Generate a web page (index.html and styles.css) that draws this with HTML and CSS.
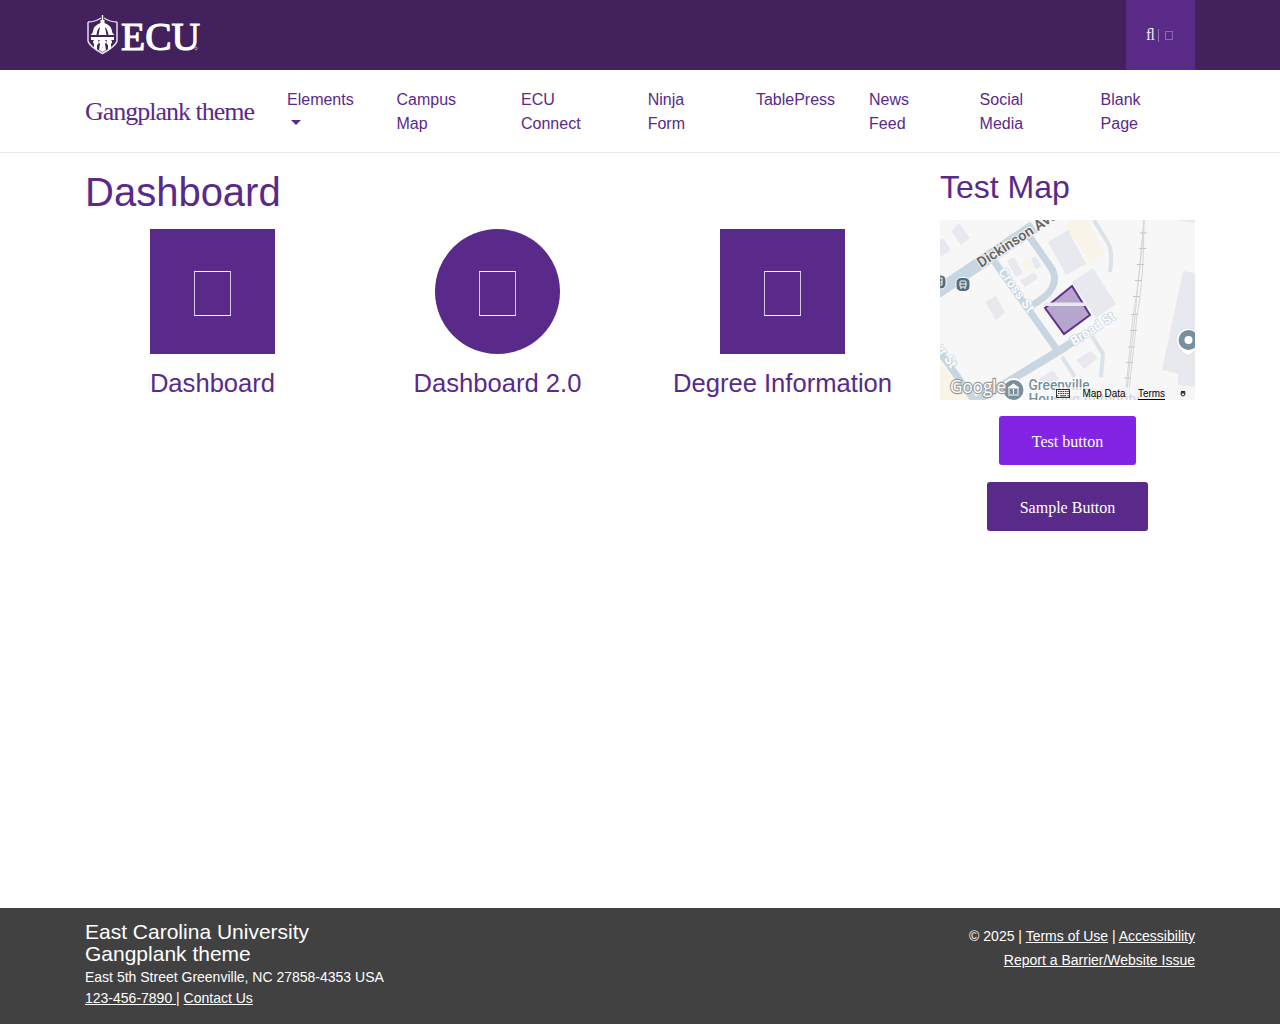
FILE: index.html
```html
<!DOCTYPE html>
<html lang="en">
<head>
<meta charset="utf-8">
<title>Dashboard - Gangplank theme</title>
<link rel="stylesheet" href="styles.css">
</head>
<body>
<header class="topbar"><div class="container topbar-inner">
  <svg class="logo" width="116" height="44" viewBox="85 13 116 44" aria-label="ECU">
    <path d="M88 22Q95 22 101 18M117 22Q110 22 104 18M88 22V41Q89 46 102.500 53.500Q116 46 117 41V22" fill="none" stroke="#e4dce9" stroke-width="1.500"/>
    <path d="M102.500 15V22" stroke="#fff" stroke-width="1.400"/>
    <path d="M100.500 20h4v3q7 2 8 10l2 2h-6q-1-6-3.500-8l1.500 8h-8l1.500-8q-3 2-3.500 8h-6l2-2q1-8 8-10z" fill="#fff"/>
    <path d="M91 37h23v3h-3q2 2 0 4v4l-3 2v-5q-3-2-1-5h-2q2 2 0 4l1 6-3.500 2-3.500-2 1-6q-2-2 0-4h-2q2 3-1 5v5l-3-2v-4q-2-2 0-4h-3z" fill="#fff"/>
    <text class="wordmark" x="121" y="49.700" textLength="79" lengthAdjust="spacingAndGlyphs">ECU</text>
    <circle cx="196" cy="48.500" r="1.300" fill="none" stroke="#bda9ca" stroke-width=".8"/>
  </svg>
  <div class="tools"><span class="search">&#xfb02;</span><span class="divider"></span><span class="small-box"></span></div>
</div></header>
<nav class="navbar"><div class="container nav-inner">
  <a class="brand">Gangplank theme</a>
  <div class="menu">
    <a>Elements<br><span class="caret"></span></a><a>Campus<br>Map</a><a>ECU<br>Connect</a><a>Ninja<br>Form</a><a>TablePress</a><a>News<br>Feed</a><a>Social<br>Media</a><a>Blank<br>Page</a>
  </div>
</div></nav>
<main class="container main">
  <section class="content">
    <h1>Dashboard</h1>
    <div class="cards">
      <a class="card"><span class="tile"><span class="glyph"></span></span><span class="label">Dashboard</span></a>
      <a class="card"><span class="tile round"><span class="glyph"></span></span><span class="label">Dashboard 2.0</span></a>
      <a class="card"><span class="tile"><span class="glyph"></span></span><span class="label">Degree Information</span></a>
    </div>
  </section>
  <aside class="sidebar">
    <h2>Test Map</h2>
    <svg class="map" width="255" height="180" viewBox="0 0 255 180">
      <rect width="255" height="180" fill="#f7f7f7"/>
      <path d="M0 142L30 180H0z" fill="#f8f4e8"/>
      <g fill="#e8e9ef">
        <path d="M11 11l8-8 11 15-9 7zM0 20l3-2 8 12-11 7zM45 82l11-6 9 17-9 7zM108 22l20-12 18 34-20 11zM132 62l21-14 23 36-20 14zM243 51l12 2v114l-17-2v-11l-16-4zM235 0h20v3zM136 140l15-9 7 7-14 11zM67 41l7-4 9 16-7 4zM80 61l14-9 4 6-13 9zM91 39l5-3 5 10-5 4zM99 159l14-9 6 9-14 7z"/>
      </g>
      <path d="M125 5l8-8h12l20 36-14 10zM82 43l4-4 9 8-7 4z" fill="#f9f4e8"/>
      <g fill="none" stroke="#dce2e9" stroke-width="4">
        <path d="M154 0L168 23Q173 32 170 52M122 137L135 157M152 116L163 134 161 157"/>
      </g>
      <g fill="none" stroke="#c8d6e2">
        <path d="M-3 72L94 7" stroke-width="13"/>
        <path d="M54 41L120 134" stroke-width="7"/>
        <path d="M31 184L122 129 143 115" stroke-width="8"/>
        <path d="M89 16L110 46Q118 57 112 68Q108 76 91 86" stroke-width="7"/>
        <path d="M-3 128L37 184" stroke-width="7"/>
      </g>
      <g fill="none" stroke="#d3d6da">
        <path d="M204 0Q200 60 193 96L185 180M204 0Q204 60 197 96L188 180M204 0L195 96 186 180"/>
        <path d="M200 13h7M199 28.500h7M197 44.500h7M195 60.500h7M193 76.500h7M191 94.500h7M190 110.500h7M188 127h7M186 142.500h7M184 158h7" stroke="#c5c8cb"/>
      </g>
      <path d="M105 88L132 66 150 95 124 114z" fill="#b6a5cd" stroke="#5e3191" stroke-width="2"/>
      <path d="M104 82.500H144L147 86H104z" fill="#e8e7ee"/>
      <g class="street">
        <text transform="translate(41 48) rotate(-33)" textLength="92" lengthAdjust="spacingAndGlyphs">Dickinson Ave</text>
      </g>
      <g class="road-name">
        <text transform="translate(58 52) rotate(54)" textLength="51">Cross St</text>
        <text transform="translate(134 126) rotate(-33)" textLength="50">Broad St</text>
        <text transform="translate(-5 127) rotate(54)">er St</text>
      </g>
      <g fill="#546e7d" stroke="#fff">
        <rect x="-8" y="55" width="14" height="14" rx="5"/><rect x="16" y="57.500" width="14" height="14" rx="5"/>
      </g>
      <g fill="none" stroke="#fff">
        <rect x="20" y="61" width="6" height="6" rx="1"/><path d="M20 64h6M21 69v-2M25 69v-2M0 58h2v7h-2M0 62h2"/>
      </g>
      <path d="M248 136Q236 129 236 120A12 12 0 0 1 260 120Q260 129 248 136z" fill="#fff" stroke="#ddd"/>
      <circle cx="248.500" cy="120" r="10" fill="#78909c"/><circle cx="248.500" cy="120" r="4" fill="#fff"/>
      <g class="place"><text x="88.500" y="170" textLength="61" lengthAdjust="spacingAndGlyphs">Greenville</text><text x="88.500" y="184" textLength="111" lengthAdjust="spacingAndGlyphs">Housing Authority</text></g>
      <circle cx="73.500" cy="170" r="11" fill="#78909c" stroke="#fff" stroke-width="2"/>
      <path d="M68 168l5.500-4 5.500 4zM69 169v5M73.500 169v5M78 169v5M68 175h11" fill="#fff" stroke="#fff"/>
      <text class="google" x="10" y="172.500" textLength="56" lengthAdjust="spacingAndGlyphs">Google</text>
      <rect x="115" y="167" width="140" height="13" fill="#f5f5f5" opacity=".7"/>
      <rect x="116.500" y="169.500" width="13" height="8" fill="#f5f5f5" stroke="#333"/>
      <path d="M118 171.500h11M118 173.500h11" stroke="#333" stroke-dasharray="1.500 .8"/><path d="M117 175.800h1.500M120 175.800h6M127.500 175.800h1.500" stroke="#333"/>
      <g class="credits"><text x="142.500" y="177" textLength="43" lengthAdjust="spacingAndGlyphs">Map Data</text><text x="198" y="177" textLength="27" lengthAdjust="spacingAndGlyphs">Terms</text></g>
      <path d="M198 179.500h27" stroke="#000"/>
      <path d="M241 171.500h4M240.500 173h5" stroke="#222"/><circle cx="243" cy="174" r="1.900" fill="none" stroke="#222"/>
    </svg>
    <a class="button bright">Test button</a>
    <a class="button">Sample Button</a>
  </aside>
</main>
<footer class="footer"><div class="container footer-inner">
  <div><div class="org">East Carolina University<br>Gangplank theme</div><div class="address">East 5th Street Greenville, NC 27858-4353 USA<br><u>123-456-7890 </u>| <u>Contact Us</u></div></div>
  <div class="legal">© 2025 | <u>Terms of Use</u> | <u>Accessibility</u><br><u>Report a Barrier/Website Issue</u></div>
</div></footer>
</body>
</html>
```
FILE: styles.css
```css
* { box-sizing: border-box; }
body { margin: 0; min-height: 1024px; display: flex; flex-direction: column; background: #fff; color: #592a8a; font: 16px/24px "Liberation Sans", Arial, sans-serif; }
.container { width: 1110px; margin: 0 auto; }
.topbar { height: 70px; background: #43215d; }
.topbar-inner { display: flex; justify-content: space-between; }
.logo { margin-top: 13px; overflow: visible; }
.wordmark { font: 41px "Liberation Serif", serif; fill: #fff; stroke: #fff; stroke-width: 1.200px; }
.tools { width: 69px; height: 70px; padding-left: 20px; background: #592a86; display: flex; align-items: center; }
.search { font: 16px "Liberation Serif", serif; color: #eee8f3; width: 12px; }
.divider { width: 1px; height: 13px; margin-right: 6px; background: #9175b1; }
.small-box { width: 8px; height: 9px; border: 1px solid #8b6bac; }
.navbar { height: 83px; border-bottom: 1px solid #e9e9e9; }
.nav-inner { display: flex; }
.brand { width: 202px; padding-top: 27px; font: 26px/30px "Liberation Serif", serif; letter-spacing: -1px; white-space: nowrap; }
.menu { display: grid; grid-template-columns: 109.500px 124.500px 126.700px 108.200px 113.200px 110.500px 121px 90px; padding-top: 18px; }
.caret { display: inline-block; margin-left: 4px; vertical-align: 4px; border: 5px solid transparent; border-top-color: #592a8a; border-bottom: 0; }
.main { flex: 1; display: flex; }
.content { width: 855px; }
h1, h2 { margin: 0; font-weight: 400; }
h1 { padding-top: 15px; font-size: 40px; line-height: 48px; }
.cards { margin-top: 13px; display: grid; grid-template-columns: repeat(3, 285px); }
.card { width: 255px; display: flex; flex-direction: column; align-items: center; }
.tile { width: 125px; height: 125px; display: flex; align-items: center; justify-content: center; background: #592a8a; }
.round { border-radius: 50%; }
.glyph { width: 37px; height: 45px; margin-top: 4px; border: 1px solid #fff; border-left-color: #d5c9e0; border-right-color: #d5c9e0; }
.label { margin-top: 14px; font-size: 25.600px; line-height: 31px; white-space: nowrap; }
.sidebar { width: 255px; display: flex; flex-direction: column; align-items: center; }
h2 { align-self: flex-start; margin-top: 15px; font-size: 32px; line-height: 38px; }
.map { margin: 14px 0 16px; }
.map text { font-family: Roboto, sans-serif; }
.map .street text { font-size: 14.500px; font-weight: 600; fill: #666; stroke: #f7f7f7; stroke-width: 2px; paint-order: stroke; }
.map .road-name text { font-size: 13px; font-weight: 500; fill: #fff; stroke: #c8d6e2; stroke-width: 1.500px; paint-order: stroke; }
.map .place text { font-size: 14px; font-weight: 500; fill: #78909c; stroke: #fff; stroke-width: 2px; paint-order: stroke; }
.map .google { font: 19px "Open Sans", sans-serif; fill: #fff; stroke: #999; stroke-width: 2.400px; paint-order: stroke; }
.map .credits text { font: 10px "Liberation Sans", sans-serif; fill: #000; }
.button { height: 49px; padding: 14px 33px 0; margin-bottom: 17px; border-radius: 3px; background: #592a8a; color: #fff; font-family: "Liberation Serif", serif; }
.bright { background: #8224e3; }
.footer { height: 116px; background: #414141; color: #fff; }
.footer-inner { display: flex; justify-content: space-between; }
.org { padding-top: 13px; font-size: 21px; line-height: 22px; }
.address { margin-top: 2px; font-size: 14px; line-height: 21px; }
.legal { padding-top: 16px; text-align: right; font-size: 14px; line-height: 24px; }
```
